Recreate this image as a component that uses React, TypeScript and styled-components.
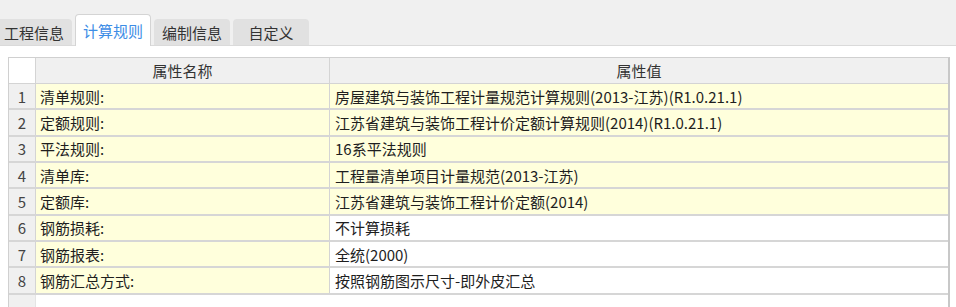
import React, { useState } from 'react'
import styled, { createGlobalStyle } from 'styled-components'

const GlobalStyle = createGlobalStyle`
  html, body {
    margin: 0;
    padding: 0;
    background: #ffffff;
  }
  body {
    font-family: "Noto Sans CJK SC", "Noto Sans", sans-serif;
    color: #222;
  }
`

const TABS = ['工程信息', '计算规则', '编制信息', '自定义']

const ROWS = [
  { name: '清单规则:', value: '房屋建筑与装饰工程计量规范计算规则(2013-江苏)(R1.0.21.1)', locked: true },
  { name: '定额规则:', value: '江苏省建筑与装饰工程计价定额计算规则(2014)(R1.0.21.1)', locked: true },
  { name: '平法规则:', value: '16系平法规则', locked: true },
  { name: '清单库:', value: '工程量清单项目计量规范(2013-江苏)', locked: true },
  { name: '定额库:', value: '江苏省建筑与装饰工程计价定额(2014)', locked: true },
  { name: '钢筋损耗:', value: '不计算损耗', locked: false },
  { name: '钢筋报表:', value: '全统(2000)', locked: false },
  { name: '钢筋汇总方式:', value: '按照钢筋图示尺寸-即外皮汇总', locked: false },
]

const App = () => {
  const [active, setActive] = useState<number>(1)

  return (
    <Page>
      <GlobalStyle />
      <TabBar>
        {TABS.map((t, i) => (
          <Tab key={t} active={i === active} first={i === 0} onClick={() => setActive(i)}>
            {t}
          </Tab>
        ))}
      </TabBar>
      <Panel>
        <Grid>
          <HeaderRow>
            <Corner />
            <HeadCell>属性名称</HeadCell>
            <HeadCell last>属性值</HeadCell>
          </HeaderRow>
          {ROWS.map((r, i) => (
            <Row key={r.name}>
              <NumCell>{i + 1}</NumCell>
              <Cell yellow>{r.name}</Cell>
              <Cell yellow={r.locked} last>
                {r.value}
              </Cell>
            </Row>
          ))}
          <Filler>
            <NumFill />
            <div />
            <div />
          </Filler>
        </Grid>
      </Panel>
    </Page>
  )
}

export default App

const Page = styled.div`
  width: 956px;
  height: 307px;
  display: flex;
  flex-direction: column;
  overflow: hidden;
`

const TabBar = styled.div`
  height: 46px;
  box-sizing: border-box;
  background: #f0f0f0;
  border-bottom: 1px solid #dadada;
  display: flex;
  align-items: flex-end;
  gap: 3px;
`

const Tab = styled.div<{ active: boolean; first: boolean }>`
  width: 76px;
  box-sizing: border-box;
  height: ${(p) => (p.active ? '32px' : '26px')};
  margin-left: ${(p) => (p.first ? '-4px' : '0')};
  margin-bottom: ${(p) => (p.active ? '-1px' : '0')};
  display: flex;
  align-items: center;
  justify-content: center;
  padding-top: ${(p) => (p.active ? '0' : '1px')};
  background: ${(p) => (p.active ? '#ffffff' : '#e1e1e1')};
  border: ${(p) => (p.active ? '1px solid #d4d4d4' : 'none')};
  border-bottom: none;
  border-radius: 4px 4px 0 0;
  color: ${(p) => (p.active ? '#3d8de6' : '#333333')};
  font-size: 15px;
  cursor: default;
`

const Panel = styled.div`
  flex: 1;
  display: flex;
  padding: 11px 6px 0 8px;
  background: #ffffff;
  min-height: 0;
`

const Grid = styled.div`
  flex: 1;
  display: flex;
  flex-direction: column;
  box-sizing: border-box;
  border-top: 1px solid #d0d0d0;
  border-left: 1px solid #d0d0d0;
  border-right: 2px solid #c8c8c8;
  font-size: 15px;
`

const HeaderRow = styled.div`
  display: grid;
  grid-template-columns: 27px 294px 1fr;
  height: 25px;
  border-bottom: 1px solid #d4d4d4;
`

const Corner = styled.div`
  background: #ffffff;
  border-right: 1px solid #d4d4d4;
`

const HeadCell = styled.div<{ last?: boolean }>`
  background: #f0f0f0;
  display: flex;
  align-items: center;
  justify-content: center;
  color: #333;
  border-right: ${(p) => (p.last ? 'none' : '1px solid #d4d4d4')};
`

const Row = styled.div`
  display: grid;
  grid-template-columns: 27px 294px 1fr;
  height: 26.33px;
  box-sizing: border-box;
  border-bottom: 2px solid #d6d6d6;
`

const NumCell = styled.div`
  background: #f0f0f0;
  color: #444;
  display: flex;
  align-items: center;
  justify-content: center;
  border-right: 1px solid #d4d4d4;
`

const Cell = styled.div<{ yellow?: boolean; last?: boolean }>`
  background: ${(p) => (p.yellow ? '#ffffdc' : '#ffffff')};
  display: flex;
  align-items: center;
  padding-left: ${(p) => (p.last ? '5px' : '4px')};
  white-space: nowrap;
  overflow: hidden;
  color: #1e1e1e;
  border-right: ${(p) => (p.last ? 'none' : '1px solid #d4d4d4')};
`

const Filler = styled.div`
  flex: 1;
  display: grid;
  grid-template-columns: 27px 294px 1fr;
`

const NumFill = styled.div`
  background: #f0f0f0;
  border-right: 1px solid #e4e4e4;
`
